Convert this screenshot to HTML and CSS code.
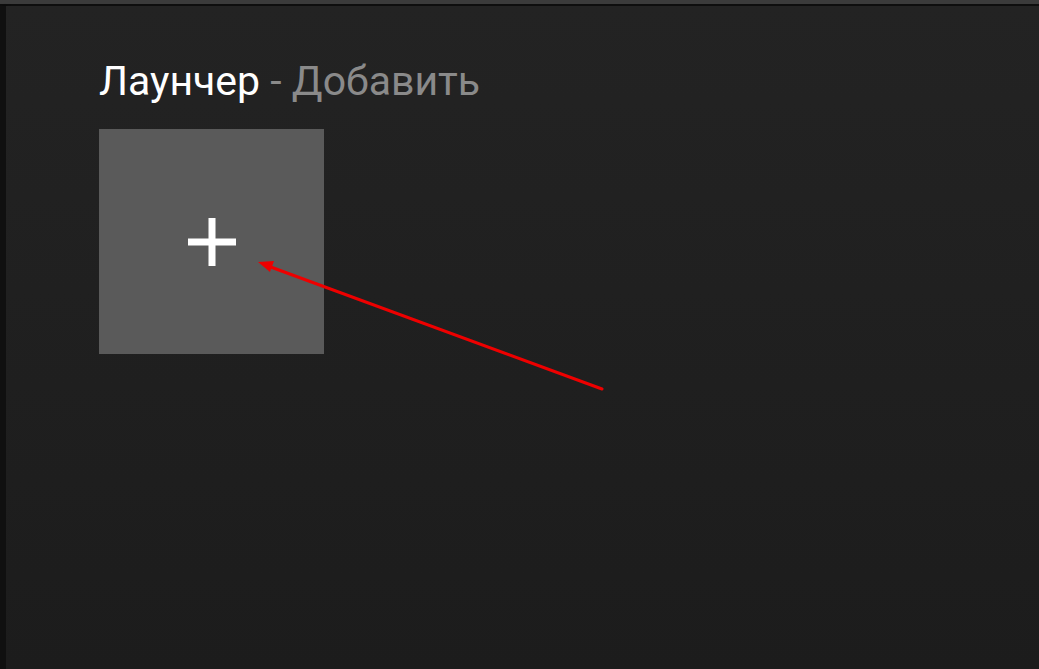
FILE: index.html
```html
<!DOCTYPE html>
<html lang="ru">
<head>
<meta charset="utf-8">
<title>Лаунчер</title>
<link rel="stylesheet" href="styles.css">
</head>
<body>
<div class="topbar"></div>
<div class="main">
  <div class="side"></div>
  <div class="content">
    <h1 class="title"><span class="t-main">Лаунчер</span><span class="t-sub"> - Добавить</span></h1>
    <div class="grid">
      <div class="tile add"><span class="plus"></span></div>
    </div>
    <svg class="arrow" width="1039" height="669" viewBox="0 0 1039 669">
      <line x1="602" y1="389" x2="268" y2="266" stroke="#ee0000" stroke-width="3" stroke-linecap="round"/>
      <polygon points="258,262 274,261 270,272" fill="#ee0000"/>
    </svg>
  </div>
</div>
</body>
</html>
```
FILE: styles.css
```css
html, body {
  margin: 0;
  padding: 0;
  height: 100%;
  overflow: hidden;
}
body {
  background: #1d1d1d;
  font-family: Roboto, "Noto Sans", sans-serif;
  position: relative;
}
.topbar {
  height: 4px;
  background: #3b3b3b;
  border-bottom: 2px solid #0e0e0e;
}
.main {
  display: flex;
  height: calc(100% - 6px);
}
.side {
  width: 6px;
  flex: none;
  background: #101010;
  box-shadow: 2px 0 3px rgba(0,0,0,0.5);
}
.content {
  flex: 1;
  padding: 51px 0 0 93px;
  background: linear-gradient(to bottom, #232323 0%, #1c1c1c 100%);
}
.title {
  margin: 0;
  font-weight: 400;
  font-size: 41px;
  line-height: 48px;
  letter-spacing: 0;
}
.t-main { color: #ffffff; }
.t-sub { color: #8a8a8a; }
.grid {
  display: flex;
  margin-top: 24px;
}
.tile {
  width: 225px;
  height: 225px;
  background: #5a5a5a;
  display: flex;
  align-items: center;
  justify-content: center;
}
.plus {
  position: relative;
  width: 48px;
  height: 48px;
  margin-top: 1px;
}
.plus::before, .plus::after {
  content: "";
  position: absolute;
  background: #ffffff;
}
.plus::before {
  left: 0; right: 0;
  top: 50%;
  height: 7px;
  transform: translateY(-50%);
}
.plus::after {
  top: 0; bottom: 0;
  left: 50%;
  width: 7px;
  transform: translateX(-50%);
}
.arrow {
  position: absolute;
  left: 0;
  top: 0;
  pointer-events: none;
}
```
